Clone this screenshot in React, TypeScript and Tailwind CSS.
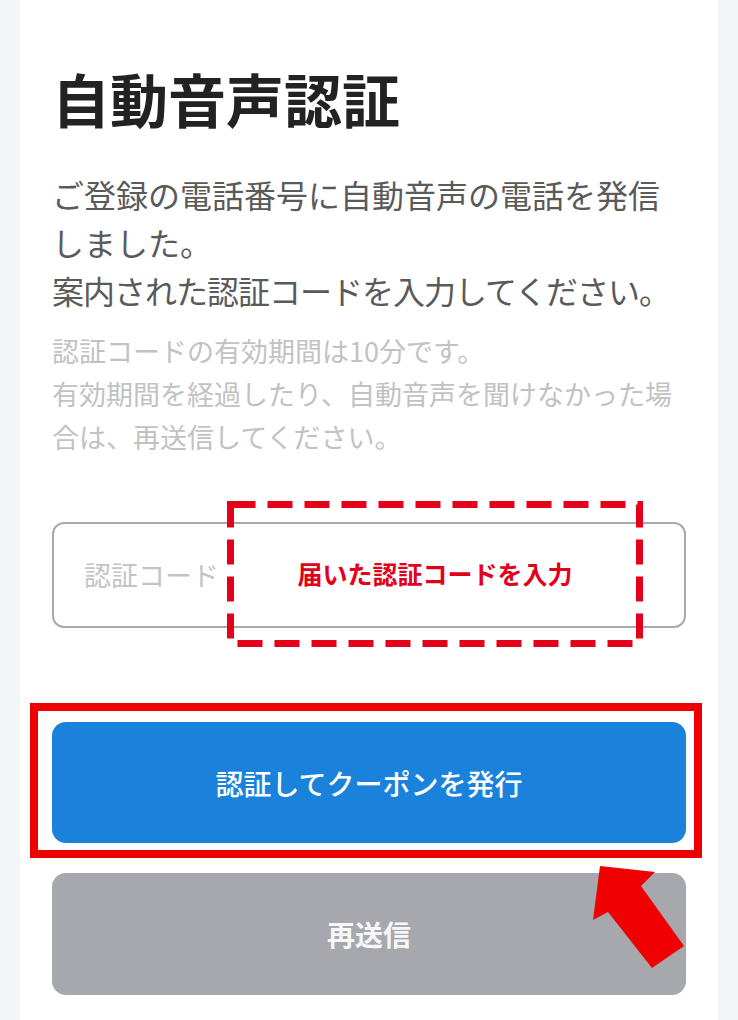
import React from "react";

function DashedFrame() {
  return (
    <svg className="pointer-events-none absolute left-[175px] top-[-21px]" width="416" height="146" viewBox="0 0 416 146">
      <rect x="3.5" y="3.5" width="409" height="139" fill="none" stroke="#e3001b" strokeWidth="7" strokeDasharray="25 12" />
    </svg>
  );
}

function Arrow() {
  return (
    <svg className="pointer-events-none absolute left-0 top-0" width="738" height="1020" viewBox="0 0 738 1020">
      <polygon points="600,866 655,872 641,886 684,946 652,968 608,912 593,920" fill="#f00000" />
    </svg>
  );
}

export default function App() {
  return (
    <div className="relative min-h-[1020px] bg-[#f4f5f7] px-[20px] font-['Noto_Sans_CJK_JP',sans-serif]">
      <div className="min-h-[1020px] bg-white px-[32px] pt-[58px] pb-[25px]">
        <h1 className="text-[58px] font-bold leading-[80px] text-[#222]">自動音声認証</h1>

        <p className="mt-[32px] whitespace-nowrap text-[32px] leading-[48px] text-[#5a5a5a]">
          ご登録の電話番号に自動音声の電話を発信
          <br />
          しました。
          <br />
          <span className="tracking-[-1px]">案内された認証コードを入力してください。</span>
        </p>

        <p className="mt-[15px] whitespace-nowrap text-[27px] leading-[43px] text-[#c2c2c2]">
          認証コードの有効期間は10分です。
          <br />
          有効期間を経過したり、自動音声を聞けなかった場
          <br />
          合は、再送信してください。
        </p>

        {/* code input */}
        <div className="relative mt-[64px]">
          <div className="flex h-[106px] items-center rounded-[12px] border-2 border-[#a9a9a9] bg-white pl-[30px]">
            <span className="text-[27px] text-[#c4c4c4]">認証コード</span>
          </div>
          <DashedFrame />
          <div className="pointer-events-none absolute left-[175px] top-[-21px] flex h-[146px] w-[416px] items-center justify-center">
            <span className="text-[25px] font-bold text-[#e3001b]">届いた認証コードを入力</span>
          </div>
        </div>

        {/* submit */}
        <div className="relative mt-[94px]">
          <button className="flex h-[121px] w-full items-center justify-center rounded-[14px] bg-[#1b82dc] text-[28px] font-medium text-white">
            認証してクーポンを発行
          </button>
          <div className="pointer-events-none absolute left-[-22px] right-[-16px] top-[-19px] bottom-[-15px] border-[8px] border-[#ee0000]" />
        </div>

        <button className="mt-[30px] flex h-[122px] w-full items-center justify-center rounded-[14px] bg-[#a6a8ad] text-[28px] font-bold text-[#f7f7f7]">
          再送信
        </button>
      </div>
      <Arrow />
    </div>
  );
}
